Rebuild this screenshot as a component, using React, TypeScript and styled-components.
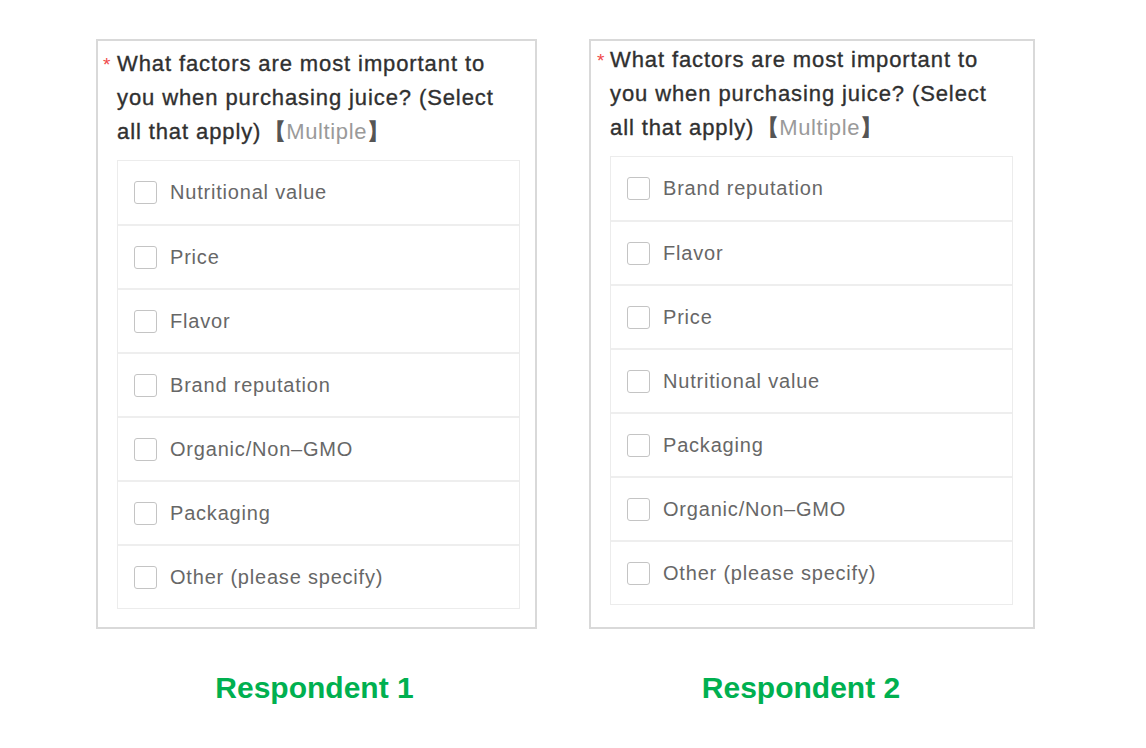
import React from "react";
import styled, { createGlobalStyle } from "styled-components";

const Global = createGlobalStyle`
  html, body { margin: 0; padding: 0; background: #ffffff; }
  body { font-family: "Liberation Sans", Arial, sans-serif; }
`;

const Page = styled.div`
  width: 1146px;
  height: 748px;
  box-sizing: border-box;
  padding: 39px 0 0 96px;
  display: flex;
  gap: 52px;
  align-items: flex-start;
`;

const Column = styled.div`
  display: flex;
  flex-direction: column;
  align-items: center;
`;

const Panel = styled.div<{ $w: number; $pt: number; $pl: number; $pr: number; $pb: number; $gap: number }>`
  width: ${(p) => p.$w}px;
  height: 590px;
  box-sizing: border-box;
  border: 2px solid #d9d9d9;
  padding: ${(p) => `${p.$pt}px ${p.$pr}px ${p.$pb}px ${p.$pl}px`};
  display: flex;
  flex-direction: column;
  gap: ${(p) => p.$gap}px;
`;

const Question = styled.div`
  display: flex;
  align-items: flex-start;
`;

const Star = styled.span<{ $w: number }>`
  width: ${(p) => p.$w}px;
  flex: none;
  color: #f0484a;
  font-size: 19px;
  line-height: 34px;
  padding-top: 1px;
`;

const QText = styled.div`
  font-size: 22px;
  line-height: 34px;
  color: #303030;
  letter-spacing: 0.9px;
  -webkit-text-stroke: 0.35px #303030;
  white-space: nowrap;
`;

const Tag = styled.span`
  color: #9a9a9a;
  -webkit-text-stroke: 0;
  letter-spacing: 0.6px;
`;

const Bracket = styled.span<{ $ml?: number }>`
  color: #555555;
  font-weight: bold;
  -webkit-text-stroke: 0;
  letter-spacing: 0;
  margin-left: ${(p) => p.$ml ?? 0}px;
`;

const List = styled.div<{ $ml: number }>`
  margin-left: ${(p) => p.$ml}px;
  width: 403px;
  border: 1px solid #ececec;
  box-sizing: border-box;
  display: flex;
  flex-direction: column;
`;

const Row = styled.label`
  height: 64px;
  box-sizing: border-box;
  display: flex;
  align-items: center;
  padding-left: 16px;
  gap: 13px;
  border-top: 2px solid #eeeeee;
  &:first-child { border-top: none; height: 63px; }
`;

const Box = styled.span`
  width: 23px;
  height: 23px;
  box-sizing: border-box;
  border: 1.5px solid #c4c4c4;
  border-radius: 3px;
  background: #fff;
`;

const OptText = styled.span`
  font-size: 20px;
  letter-spacing: 0.8px;
  color: #676767;
`;

const Label = styled.div<{ $shift: number }>`
  margin-top: 42px;
  margin-left: ${(p) => p.$shift}px;
  color: #00b050;
  font-weight: bold;
  font-size: 30px;
`;

const Q = () => (
  <QText>
    What factors are most important to
    <br />
    you when purchasing juice? (Select
    <br />
    all that apply)<Bracket $ml={3}>【</Bracket>
    <Tag>Multiple</Tag>
    <Bracket>】</Bracket>
  </QText>
);

const r1 = [
  "Nutritional value",
  "Price",
  "Flavor",
  "Brand reputation",
  "Organic/Non–GMO",
  "Packaging",
  "Other (please specify)",
];
const r2 = [
  "Brand reputation",
  "Flavor",
  "Price",
  "Nutritional value",
  "Packaging",
  "Organic/Non–GMO",
  "Other (please specify)",
];

export default function App() {
  return (
    <>
      <Global />
      <Page>
        <Column>
          <Panel $w={441} $pt={6} $pl={5} $pr={16} $pb={17} $gap={11}>
            <Question>
              <Star $w={14}>*</Star>
              <Q />
            </Question>
            <List $ml={14}>
              {r1.map((t) => (
                <Row key={t}>
                  <Box />
                  <OptText>{t}</OptText>
                </Row>
              ))}
            </List>
          </Panel>
          <Label $shift={-4}>Respondent 1</Label>
        </Column>
        <Column>
          <Panel $w={446} $pt={2} $pl={6} $pr={21} $pb={21} $gap={11}>
            <Question>
              <Star $w={13}>*</Star>
              <Q />
            </Question>
            <List $ml={13}>
              {r2.map((t) => (
                <Row key={t}>
                  <Box />
                  <OptText>{t}</OptText>
                </Row>
              ))}
            </List>
          </Panel>
          <Label $shift={-22}>Respondent 2</Label>
        </Column>
      </Page>
    </>
  );
}
